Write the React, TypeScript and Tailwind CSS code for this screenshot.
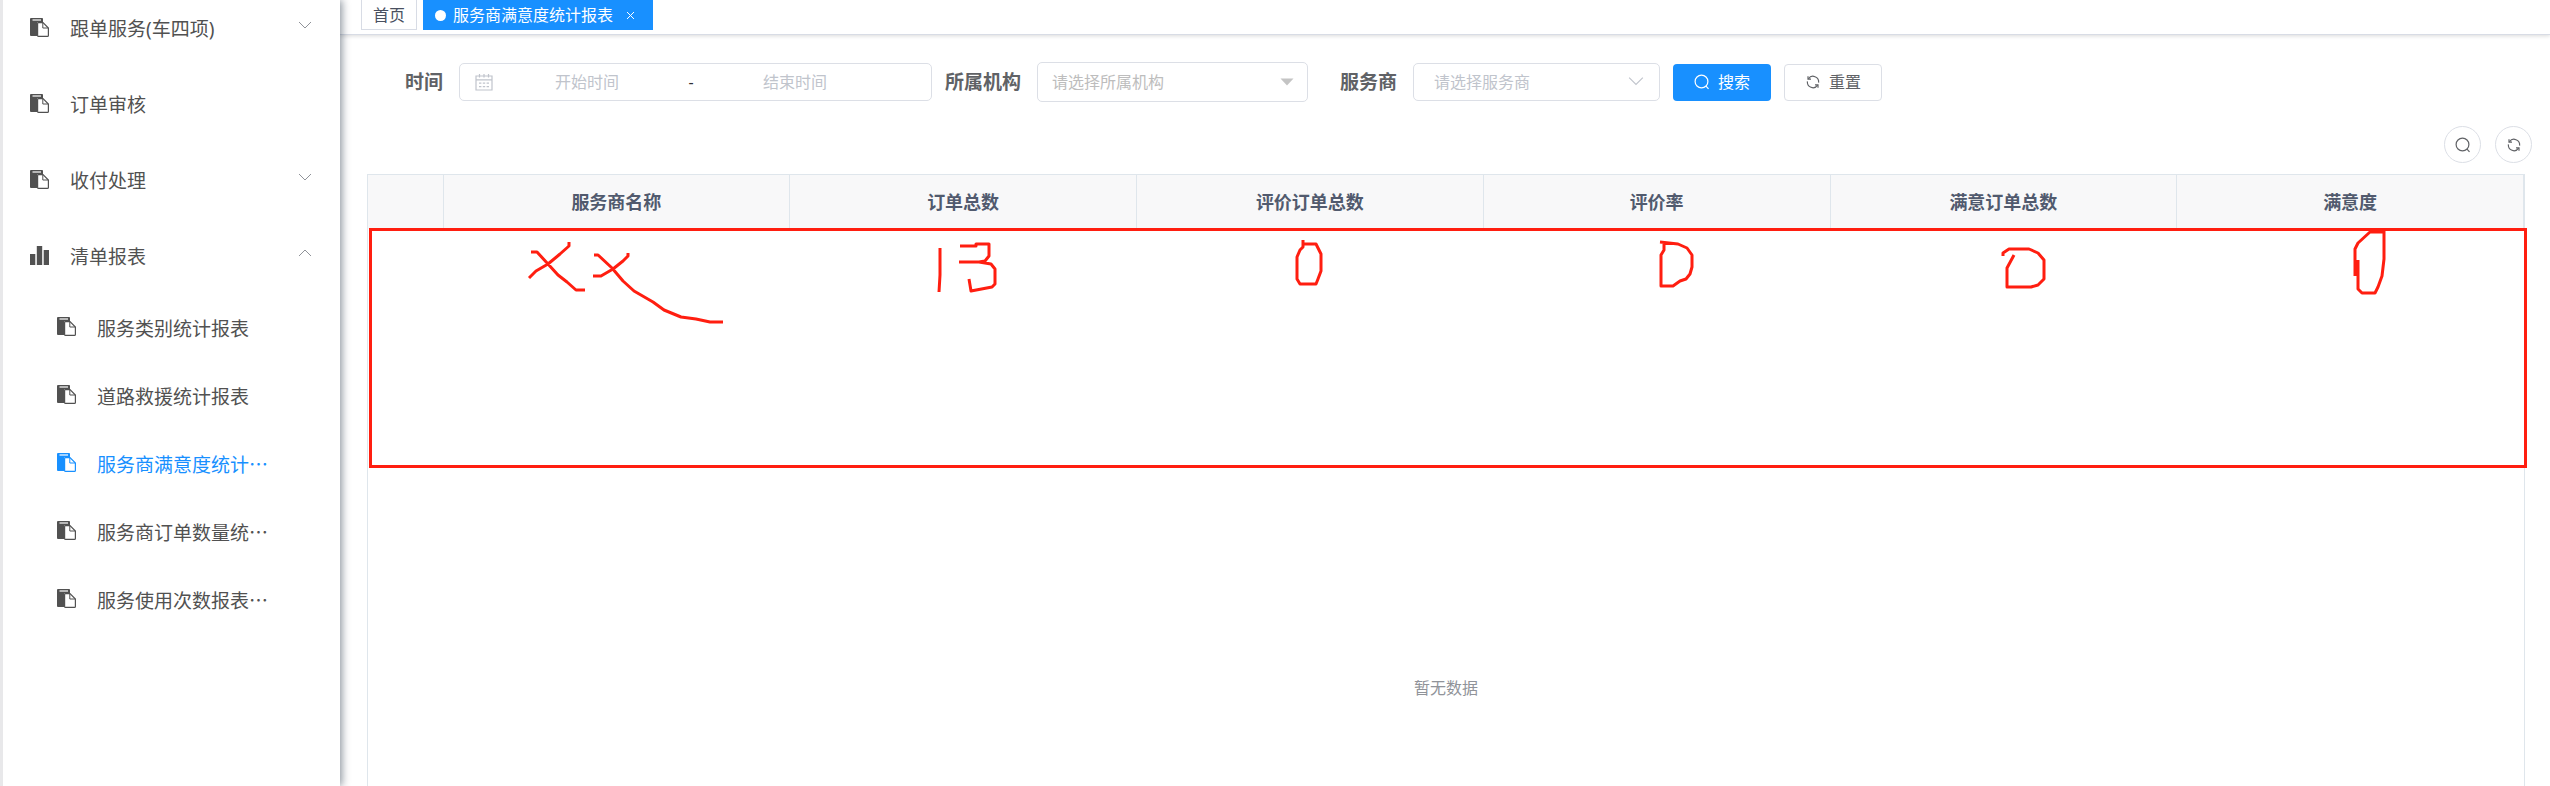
import { useState } from "react";
import clsx from "clsx";

interface MenuItem {
  title: string;
  icon: "doc" | "chart";
  arrow?: "up" | "down";
}

const menus: MenuItem[] = [
  { title: "跟单服务(车四项)", icon: "doc", arrow: "down" },
  { title: "订单审核", icon: "doc" },
  { title: "收付处理", icon: "doc", arrow: "down" },
  { title: "清单报表", icon: "chart", arrow: "up" },
];

const reports = [
  "服务类别统计报表",
  "道路救援统计报表",
  "服务商满意度统计…",
  "服务商订单数量统…",
  "服务使用次数报表…",
];

const columns = ["服务商名称", "订单总数", "评价订单总数", "评价率", "满意订单总数", "满意度"];

// Pen strokes, one drawing per column
const marks = [
  {
    left: "left-[156px]",
    path: "M3 12 H9 L20 24 L30 35 L39 42 L48 50 H57 M1 38 L8 31 L20 24 L32 14 L41 6 V2 M66 15 H70 L84 28 L95 41 L106 51 L125 62 L136 70 L153 77 L168 79 L182 82 H195 M65 36 H73 L85 29 L95 21 L100 16 V13",
  },
  {
    left: "left-[566px]",
    path: "M2 8 V35 L1 52 M22 6 H38 V4 H51 V16 L47 21 L41 22 H21 M41 22 L53 24 L57 29 V44 L54 47 L33 51 L31 39",
  },
  {
    left: "left-[924px]",
    path: "M7 0 V7 L4 10 L1 17 V39 L4 44 H20 L22 39 L25 31 V14 L20 4 H8",
  },
  {
    left: "left-[1287px]",
    path: "M1 2 L19 4 L28 8 L33 15 V27 L31 34 L27 39 L21 41 L14 46 H2 V15 L5 10 V2",
  },
  {
    left: "left-[1630px]",
    path: "M1 16 V13 L7 9 H27 L36 13 L42 20 V39 L36 45 L29 47 H5 V28 L12 15",
  },
];

function DocIcon() {
  return (
    <svg className="mb-1 h-[19px] w-[19px] shrink-0" viewBox="0 0 19 19" fill="none">
      <path d="M1 0 H12.2 Q13 0 13 1 V5 H7.5 V18 H1 Q0 18 0 17 V1 Q0 0 1 0 Z" fill="currentColor" />
      <path d="M2.5 2 H11" stroke="white" strokeOpacity="0.75" strokeWidth="1.6" />
      <path d="M7.2 4.2 H13.4 L19 9.6 V19 H7.2 Z" fill="white" />
      <path d="M8.4 4.6 H13 L18.4 10 V17.4 Q18.4 18.4 17.4 18.4 H8.6 Q7.6 18.4 7.6 17.4 V5.4 Q7.6 4.6 8.4 4.6 Z" stroke="currentColor" strokeWidth="1.2" />
      <path d="M12.8 5 V10 H18" stroke="currentColor" />
    </svg>
  );
}

function ChartIcon() {
  return (
    <svg className="mb-1 h-[19px] w-[19px] shrink-0" viewBox="0 0 19 19" fill="currentColor">
      <path d="M0 8 H5.3 V19 H0 Z M6.8 0 H12.2 V19 H6.8 Z M13.7 4 H19 V19 H13.7 Z" />
    </svg>
  );
}

function Chevron({ up = false, className = "" }: { up?: boolean; className?: string }) {
  return (
    <svg className={className} viewBox="0 0 14 14" fill="none" stroke="currentColor">
      <path d={up ? "M1 10 L7 4 L13 10" : "M1 4 L7 10 L13 4"} />
    </svg>
  );
}

function SearchIcon() {
  return (
    <svg className="h-4 w-4" viewBox="0 0 16 16" fill="none" stroke="currentColor" strokeWidth="1.2">
      <circle cx="7.5" cy="7.5" r="6.4" />
      <path d="M12 12.2 L14.5 14.8" />
    </svg>
  );
}

function RefreshIcon() {
  return (
    <svg className="h-4 w-4" viewBox="0 0 16 16" fill="none" stroke="currentColor" strokeWidth="1.2">
      <path d="M3.4 4.8 A5.6 5.6 0 0 1 13.6 8.6 M12.6 11.2 A5.6 5.6 0 0 1 2.4 7.4" />
      <path d="M3 2.2 V5.2 H6 M13 13.8 V10.8 H10" />
    </svg>
  );
}

function CalendarIcon() {
  return (
    <svg className="h-[18px] w-[18px] shrink-0" viewBox="0 0 18 18" fill="none" stroke="#c0c4cc" strokeWidth="1.2">
      <path d="M1 3 H17 V17 H1 Z M1 6.8 H17 M4.5 1 V4.5 M9 1 V4.5 M13.5 1 V4.5" />
      <path d="M4 10.2 H14 M4 13.6 H14" strokeDasharray="2.4 1.4" />
    </svg>
  );
}

export default function App() {
  const [active, setActive] = useState(2);

  return (
    <div className="flex min-h-screen bg-white font-['Noto_Sans','Noto_Sans_CJK_SC',sans-serif] text-[#606266]">
      {/* Sidebar */}
      <aside className="relative z-10 w-[340px] shrink-0 border-l-[3px] border-[#e8e8ea] bg-white shadow-[2px_0_8px_rgba(0,21,41,0.45)]">
        <nav className="text-[19px] leading-7 text-[#515151]">
          <ul className="-mt-[9px]">
            {menus.map((item) => (
              <li key={item.title}>
                <a href="#" className="flex h-[76px] items-center pr-7 pl-[27px]">
                  {item.icon === "doc" ? <DocIcon /> : <ChartIcon />}
                  <span className="ml-[21px] flex-1">{item.title}</span>
                  {item.arrow && (
                    <Chevron up={item.arrow === "up"} className="mb-2 h-[14px] w-[14px] text-[#909399]" />
                  )}
                </a>
              </li>
            ))}
          </ul>
          <ul className="-mt-px font-['Noto_Sans_CJK_SC',sans-serif]">
            {reports.map((title, i) => (
              <li key={title}>
                <a
                  href="#"
                  onClick={() => setActive(i)}
                  className={clsx("flex h-[68px] items-center pl-[54px]", i === active && "text-[#1890ff]")}
                >
                  <DocIcon />
                  <span className="ml-[21px] whitespace-nowrap">{title}</span>
                </a>
              </li>
            ))}
          </ul>
        </nav>
      </aside>

      <main className="flex min-w-0 flex-1 flex-col">
        {/* Page tabs */}
        <div className="flex h-[35px] items-start gap-[6px] border-b border-[#d8dce5] pl-[21px] text-base shadow-[0_1px_4px_rgba(0,0,0,0.15)]">
          <a href="#" className="flex h-[30px] items-center border border-t-0 border-[#d8dce5] px-[11px] text-[#495060]">
            首页
          </a>
          <a href="#" className="flex h-[30px] items-center bg-[#1890ff] pr-[18px] pl-3 text-white">
            <span className="mr-[7px] h-[11px] w-[11px] rounded-full bg-white"></span>
            服务商满意度统计报表
            <svg className="ml-[13px] h-[9px] w-[9px]" viewBox="0 0 9 9" stroke="white">
              <path d="M1 1 L8 8 M8 1 L1 8" />
            </svg>
          </a>
        </div>

        {/* Filters */}
        <form className="flex h-20 items-center pt-[14px] pl-[65px] text-base">
          <label htmlFor="start" className="mr-4 text-[19px] font-bold">时间</label>
          <div className="flex h-[38px] w-[473px] items-center rounded-[5px] border border-[#dcdfe6] px-[15px]">
            <CalendarIcon />
            <input
              id="start"
              className="w-[188px] text-center outline-none placeholder:text-[#c0c4cc]"
              placeholder="开始时间"
            />
            <span className="w-5 text-center text-[#303133]">-</span>
            <input
              aria-label="结束时间"
              className="w-[188px] text-center outline-none placeholder:text-[#c0c4cc]"
              placeholder="结束时间"
            />
          </div>

          <label htmlFor="org" className="mr-4 ml-[13px] text-[19px] font-bold">所属机构</label>
          <div className="relative w-[271px]">
            <select id="org" className="h-10 w-full appearance-none rounded-[5px] border border-[#dcdfe6] px-[14px] text-[#bdbdbd]">
              <option>请选择所属机构</option>
            </select>
            <svg className="pointer-events-none absolute top-4 right-[14px] h-2 w-[14px]" viewBox="0 0 14 8">
              <path d="M0.5 0.5 H13.5 L7 7.5 Z" fill="#c4c4c4" />
            </svg>
          </div>

          <label htmlFor="provider" className="mr-4 ml-8 text-[19px] font-bold">服务商</label>
          <div className="relative w-[247px]">
            <select id="provider" className="h-[38px] w-full appearance-none rounded-[5px] border border-[#dcdfe6] px-5 text-[#c0c4cc]">
              <option>请选择服务商</option>
            </select>
            <Chevron className="pointer-events-none absolute top-[10px] right-4 h-4 w-4 text-[#c0c4cc]" />
          </div>

          <button type="button" className="ml-[13px] flex h-[37px] w-[98px] items-center justify-center gap-2 rounded-[4px] bg-[#1890ff] text-white">
            <SearchIcon />
            搜索
          </button>
          <button type="button" className="ml-[13px] flex h-[37px] w-[98px] items-center justify-center gap-2 rounded-[4px] border border-[#dcdfe6]">
            <RefreshIcon />
            重置
          </button>
        </form>

        {/* Toolbar */}
        <div className="mt-[11px] flex justify-end gap-[14px] pr-[18px]">
          <button aria-label="搜索" className="flex h-[37px] w-[37px] items-center justify-center rounded-full border border-[#dcdfe6]">
            <SearchIcon />
          </button>
          <button aria-label="刷新" className="flex h-[37px] w-[37px] items-center justify-center rounded-full border border-[#dcdfe6]">
            <RefreshIcon />
          </button>
        </div>

        {/* Table */}
        <div className="relative mt-[11px] mr-[25px] ml-[27px] flex flex-1 flex-col border border-b-0 border-[#dfe6ec]">
          <table className="w-full table-fixed border-collapse">
            <thead>
              <tr className="h-[54px] bg-[#f8f8f9] text-[18px] text-[#515a6e]">
                <th className="w-[75px] border-r border-[#dfe6ec]"></th>
                {columns.map((name) => (
                  <th key={name} className="border-r border-[#dfe6ec] font-bold">{name}</th>
                ))}
              </tr>
            </thead>
          </table>
          <p className="mt-[447px] text-center text-base text-[#909399]">暂无数据</p>

          {/* Markup box */}
          <div className="absolute top-[53px] right-[-3px] left-px h-[240px] border-[3px] border-[#ff1e10]">
            {marks.map((mark) => (
              <svg
                key={mark.left}
                className={clsx("absolute top-[9px] h-[90px] w-[200px] overflow-visible", mark.left)}
                viewBox="0 0 200 90"
                fill="none"
                stroke="#ff1e10"
                strokeWidth="3"
                strokeLinejoin="round"
              >
                <path d={mark.path} />
              </svg>
            ))}
            <svg
              className="absolute top-0 left-[1981px] h-[70px] w-[40px] overflow-visible"
              viewBox="0 0 40 70"
              fill="none"
              stroke="#ff1e10"
              strokeWidth="3"
              strokeLinejoin="round"
            >
              <path d="M31 0 V28 L29 45 L25 56 L22 62 H9 L5 58 V29 M2 45 V18 L5 12 L17 1 H31" />
              <path d="M3 29 V44" strokeWidth="4" />
            </svg>
          </div>
        </div>
      </main>
    </div>
  );
}
